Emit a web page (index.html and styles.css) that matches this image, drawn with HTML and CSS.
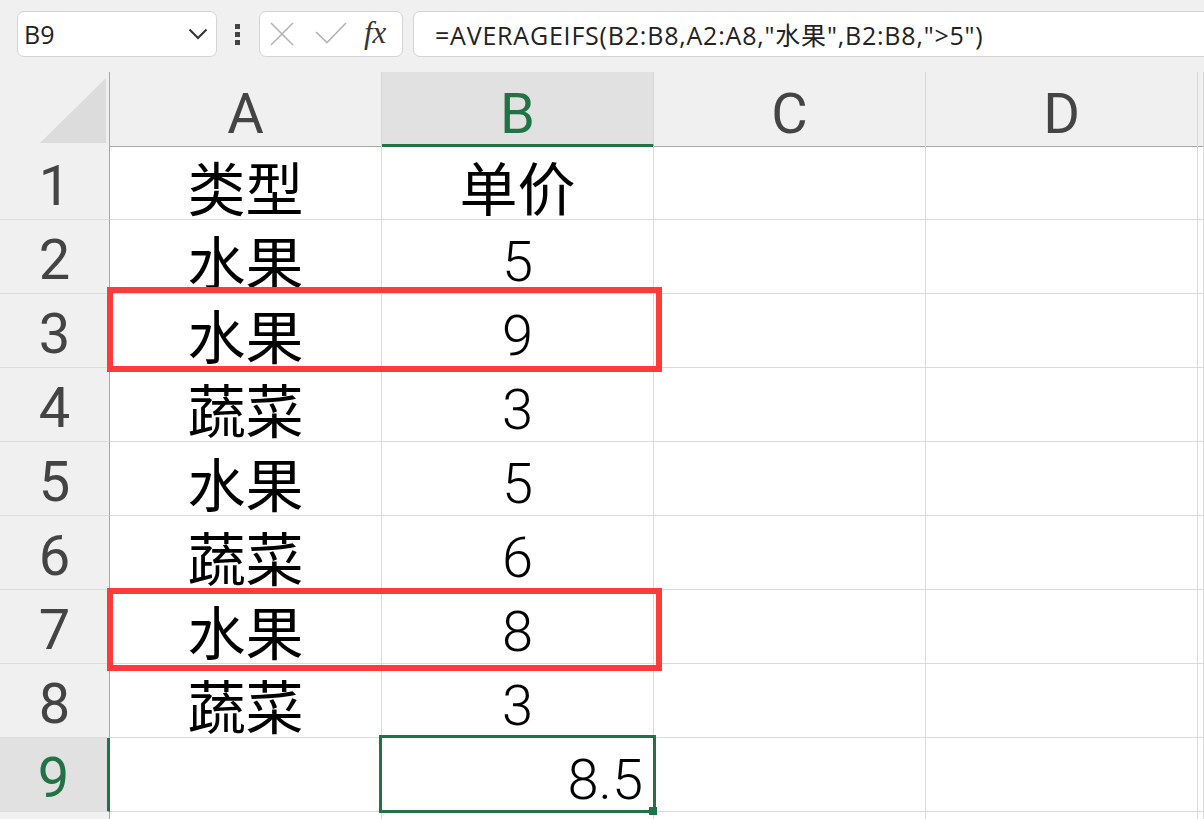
FILE: index.html
```html
<!DOCTYPE html>
<html lang="zh-CN">
<head>
  <meta charset="UTF-8" />
  <title>AVERAGEIFS</title>
  <link rel="stylesheet" href="styles.css">
</head>
<body>
  <!-- Formula bar -->
  <div class="toolbar">
    <div class="name-box">
      <span>B9</span>
      <svg class="chevron" width="20" height="12" viewBox="0 0 20 12"><path d="M1.5 1.5 L10 10 L18.5 1.5" fill="none" stroke="#333" stroke-width="2"/></svg>
    </div>
    <div class="grip"><i></i><i></i><i></i></div>
    <div class="fx-buttons">
      <svg width="24" height="24" viewBox="0 0 24 24"><path d="M1 1 L23 23 M23 1 L1 23" stroke="#b4b4b4" stroke-width="1.6" fill="none"/></svg>
      <svg class="check" width="32" height="22" viewBox="0 0 32 22"><path d="M1 10 L12 20.5 L31 1" stroke="#b4b4b4" stroke-width="1.6" fill="none"/></svg>
      <span class="fx">fx</span>
    </div>
    <div class="formula">=AVERAGEIFS(B2:B8,A2:A8,"水果",B2:B8,"&gt;5")</div>
  </div>

  <!-- Sheet -->
  <div class="sheet">
    <div class="row head-row">
      <div class="corner"><svg width="66" height="65" viewBox="0 0 66 65"><polygon points="66,0 66,65 0,65" fill="#dcdcdc"/></svg></div>
      <div class="col-head">A</div>
      <div class="col-head active">B</div>
      <div class="col-head">C</div>
      <div class="col-head">D</div>
      <div class="col-head"></div>
    </div>
    <div class="row">
      <div class="row-head">1</div>
      <div class="cell zh">类型</div><div class="cell zh">单价</div><div class="cell"></div><div class="cell"></div><div class="cell"></div>
    </div>
    <div class="row">
      <div class="row-head">2</div>
      <div class="cell zh">水果</div><div class="cell">5</div><div class="cell"></div><div class="cell"></div><div class="cell"></div>
    </div>
    <div class="row">
      <div class="row-head">3</div>
      <div class="cell zh">水果</div><div class="cell">9</div><div class="cell"></div><div class="cell"></div><div class="cell"></div>
    </div>
    <div class="row">
      <div class="row-head">4</div>
      <div class="cell zh">蔬菜</div><div class="cell">3</div><div class="cell"></div><div class="cell"></div><div class="cell"></div>
    </div>
    <div class="row">
      <div class="row-head">5</div>
      <div class="cell zh">水果</div><div class="cell">5</div><div class="cell"></div><div class="cell"></div><div class="cell"></div>
    </div>
    <div class="row">
      <div class="row-head">6</div>
      <div class="cell zh">蔬菜</div><div class="cell">6</div><div class="cell"></div><div class="cell"></div><div class="cell"></div>
    </div>
    <div class="row">
      <div class="row-head">7</div>
      <div class="cell zh">水果</div><div class="cell">8</div><div class="cell"></div><div class="cell"></div><div class="cell"></div>
    </div>
    <div class="row">
      <div class="row-head">8</div>
      <div class="cell zh">蔬菜</div><div class="cell">3</div><div class="cell"></div><div class="cell"></div><div class="cell"></div>
    </div>
    <div class="row">
      <div class="row-head active">9</div>
      <div class="cell"></div><div class="cell num">8.5</div><div class="cell"></div><div class="cell"></div><div class="cell"></div>
    </div>
    <div class="row">
      <div class="row-head"></div>
      <div class="cell"></div><div class="cell"></div><div class="cell"></div><div class="cell"></div><div class="cell"></div>
    </div>

    <!-- overlays -->
    <div class="mark mark-row3"></div>
    <div class="mark mark-row7"></div>
    <div class="selection"><span class="handle"></span></div>
  </div>
</body>
</html>
```

FILE: styles.css
```css
:root {
  --chrome-bg: #f0f0f0;
  --grid-line: #dadada;
  --head-line: #a8a8a8;
  --active-bg: #e1e1e1;
  --green: #217346;
  --mark-red: #fd3b3b;
}

html, body {
  margin: 0;
  padding: 0;
  background: var(--chrome-bg);
  height: 819px;
  overflow: hidden;
}

/* FORMULA BAR */
.toolbar {
  height: 72px;
  box-sizing: border-box;
  padding: 11px 0 0 17px;
  display: flex;
  align-items: flex-start;
  font-family: "Open Sans", "Noto Sans CJK SC", sans-serif;
  color: #222;
}
.toolbar > div {
  flex-shrink: 0;
}
.name-box {
  width: 200px;
  height: 46px;
  box-sizing: border-box;
  background: #fff;
  border: 1px solid #d4d4d4;
  border-radius: 7px;
  display: flex;
  align-items: center;
  justify-content: space-between;
  padding: 0 8px 0 6px;
  font-size: 25px;
}
.grip {
  margin-left: 18px;
  width: 6px;
  height: 46px;
  display: flex;
  flex-direction: column;
  justify-content: center;
  gap: 3px;
}
.grip i {
  display: block;
  width: 5px;
  height: 5px;
  background: #444;
}
.fx-buttons {
  margin-left: 18px;
  width: 144px;
  height: 46px;
  box-sizing: border-box;
  background: #fff;
  border: 1px solid #d4d4d4;
  border-radius: 7px;
  display: flex;
  align-items: center;
  padding-left: 10px;
}
.fx-buttons .check {
  margin-left: 21px;
  margin-top: -2px;
}
.fx {
  margin-left: 17px;
  font-family: "Liberation Serif", serif;
  font-style: italic;
  font-size: 31px;
  color: #333;
  line-height: 1;
  margin-top: -3px;
}
.formula {
  margin-left: 10px;
  width: 830px;
  height: 46px;
  box-sizing: border-box;
  background: #fff;
  border: 1px solid #d4d4d4;
  border-radius: 7px;
  padding-left: 21px;
  display: flex;
  align-items: center;
  font-size: 25px;
  letter-spacing: 0.8px;
  white-space: nowrap;
}

/* GRID */
.sheet {
  position: relative;
  background: #fff;
}
.row {
  display: grid;
  grid-template-columns: 110px 272px 272px 272px 272px 1fr;
  height: 74px;
}
.row > div {
  box-sizing: border-box;
  border-right: 1px solid var(--grid-line);
  border-bottom: 1px solid var(--grid-line);
  text-align: center;
  white-space: nowrap;
}

.head-row > div {
  background: var(--chrome-bg);
  border-bottom-color: var(--head-line);
  border-right-color: #d6d6d6;
}
.corner {
  display: flex;
  justify-content: flex-end;
  align-items: flex-end;
  padding: 0 3px 3px 0;
}
.head-row > .corner {
  border-right-color: var(--head-line);
}
.col-head, .row-head {
  font-family: "Roboto", "Liberation Sans", sans-serif;
  font-size: 56px;
  line-height: 60px;
  color: #444;
}
.col-head {
  padding-top: 12px;
}
.head-row > .col-head.active {
  background: var(--active-bg);
  color: var(--green);
  border-bottom: 3px solid var(--green);
}

.row > .row-head {
  background: var(--chrome-bg);
  padding-top: 10px;
  border-right-color: var(--head-line);
  border-bottom-color: #dcdcdc;
}
.row > .row-head.active {
  background: var(--active-bg);
  color: var(--green);
  border-right: 3px solid var(--green);
}

.cell {
  font-family: "Roboto", "Noto Sans CJK SC", sans-serif;
  font-weight: 300;
  font-size: 56px;
  line-height: 60px;
  padding-top: 12px;
  color: #000;
}
.cell.zh {
  font-family: "Noto Sans CJK SC", sans-serif;
  font-weight: 400;
  font-size: 58px;
  padding-top: 10px;
}
.cell.num {
  text-align: right;
  padding-right: 10px;
}

/* Red highlight boxes */
.mark {
  position: absolute;
  left: 107px;
  width: 555px;
  box-sizing: border-box;
  border: 6px solid var(--mark-red);
}
.mark-row3 {
  top: 215px;
  height: 85px;
}
.mark-row7 {
  top: 516px;
  height: 83px;
}

/* Active cell B9 */
.selection {
  position: absolute;
  left: 379px;
  top: 663px;
  width: 277px;
  height: 78px;
  box-sizing: border-box;
  border: 3px solid var(--green);
}
.handle {
  position: absolute;
  right: -4px;
  bottom: -5px;
  width: 8px;
  height: 8px;
  background: var(--green);
}
```
